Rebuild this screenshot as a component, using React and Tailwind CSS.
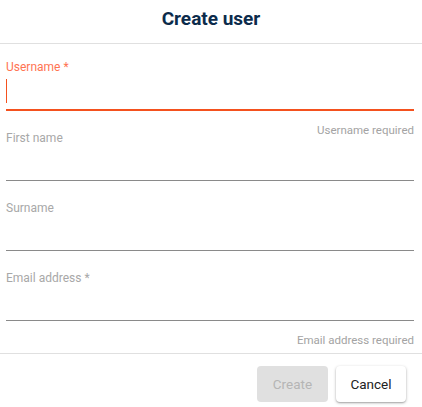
import React from "react";

const Field = ({ label, error = false, focused = false, helper = "", tall = false }) => {
  return (
    <div className="flex flex-col">
      <label
        className={`text-[12px] leading-[14px] ${error ? "text-[#ff7352]" : "text-[#a8a8a8]"}`}
      >
        {label}
      </label>
      <div
        className={`${tall ? "h-[37px]" : "h-[36px]"} ${
          focused ? "border-b-2 border-[#f4511e]" : "border-b border-[#8a8a8a]"
        }`}
      >
        {focused && <div className="mt-[5px] h-[24px] w-px bg-[#f4511e]" />}
      </div>
      <div className="h-[20px] pt-[6px] text-right">
        {helper && (
          <span className="text-[11.5px] leading-[14px] text-[#a3a3a3]">{helper}</span>
        )}
      </div>
    </div>
  );
};

export default function App() {
  return (
    <div
      className="w-[422px] h-[407px] bg-white overflow-hidden"
      style={{ fontFamily: "Roboto, 'Noto Sans', sans-serif" }}
    >
      <div className="h-[44px] border-b border-[#e0e0e0] flex justify-center pt-[7px]">
        <h1 className="text-[19px] leading-[24px] font-bold text-[#0c2b4b]">Create user</h1>
      </div>

      <div className="pl-[6px] pr-[8px] pt-[16px] pb-[12px]">
        <Field label="Username *" error focused tall helper="Username required" />
        <Field label="First name" />
        <Field label="Surname" />
        <Field label="Email address *" helper="Email address required" />
      </div>

      <div className="border-t border-[#e0e0e0] flex justify-end gap-2 pt-[12px] pr-[16px]">
        <button
          disabled
          className="w-[71px] h-[36px] rounded-[4px] bg-[#e0e0e0] text-[13.5px] text-[#b5b5b5]"
        >
          Create
        </button>
        <button className="w-[70px] h-[36px] rounded-[4px] bg-white text-[13.5px] text-[#222] shadow-[0_1px_3px_rgba(0,0,0,0.3),0_1px_1px_rgba(0,0,0,0.12)]">
          Cancel
        </button>
      </div>
    </div>
  );
}
